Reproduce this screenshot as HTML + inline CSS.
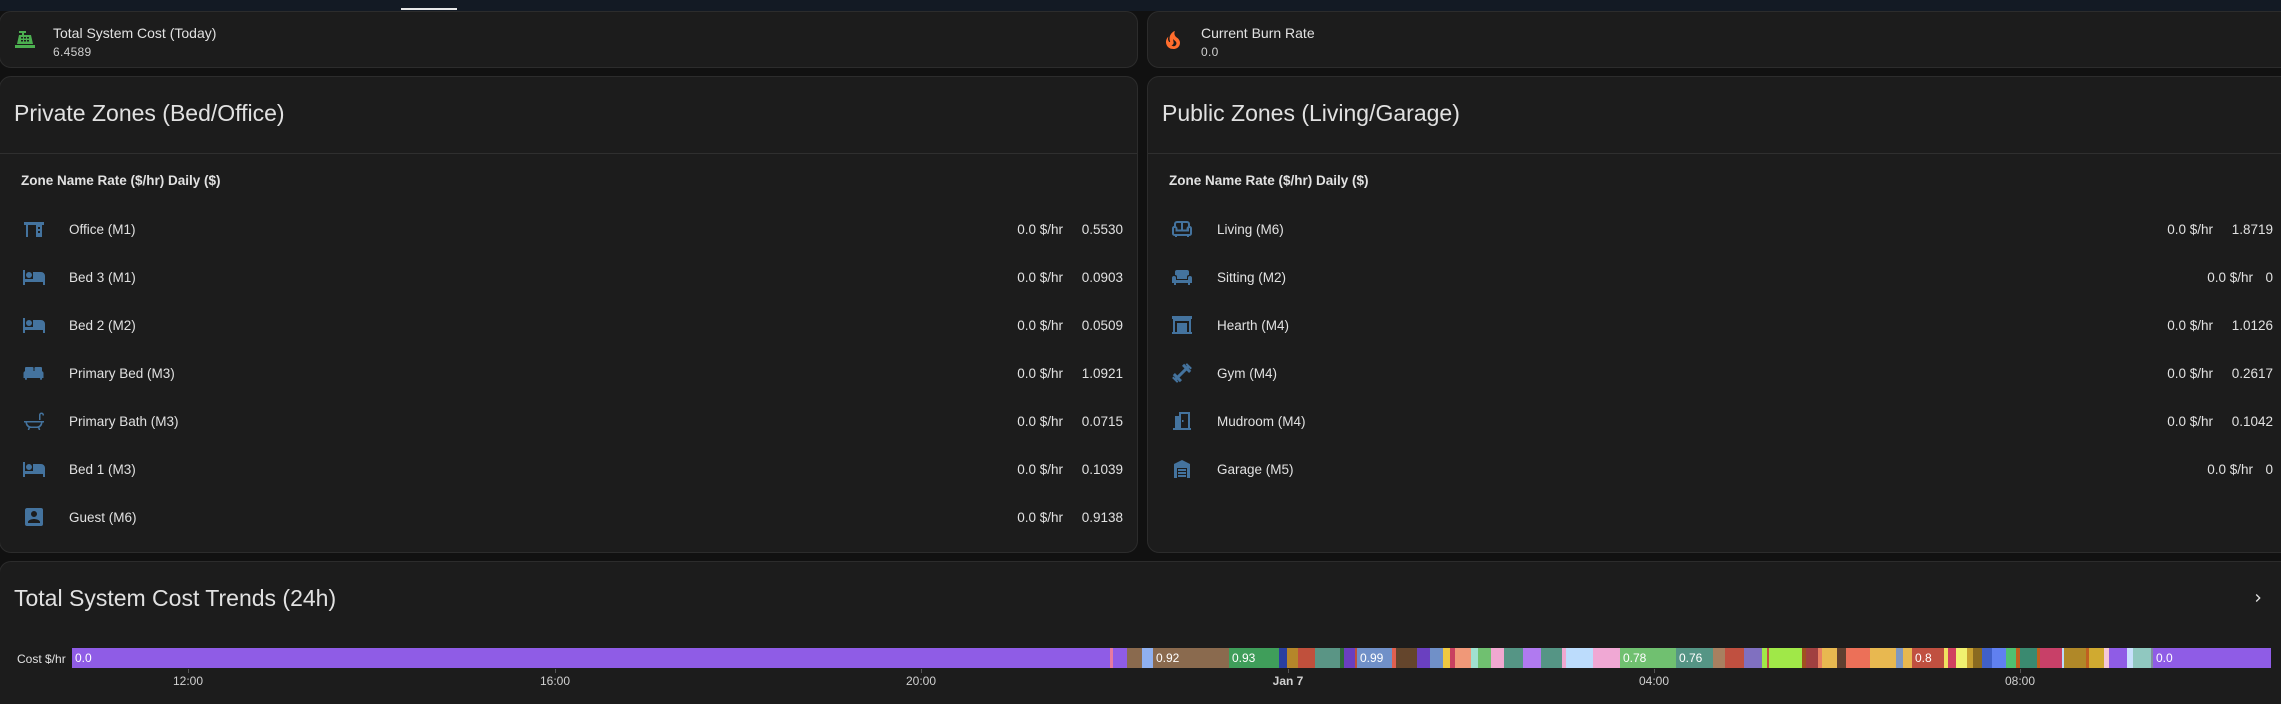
<!DOCTYPE html>
<html style="width:2281px;height:704px;overflow:hidden"><head><meta charset="utf-8"><style>
*{margin:0;padding:0;box-sizing:border-box}
body{width:2281px;height:704px;background:#111111;font-family:"Liberation Sans",sans-serif;color:#e1e1e1;position:relative;overflow:hidden}
.top{position:absolute;left:0;top:0;width:2281px;height:11px;background:#131a24}
.ind{position:absolute;left:401px;top:8px;width:56px;height:2px;background:#e8e8e8}
.card{position:absolute;background:#1c1c1c;border:1px solid #2c2c2c;border-radius:12px}
.ic{position:absolute;width:24px;height:24px}
.t1{position:absolute;font-size:14px;font-weight:500;color:#e1e1e1}
.t2{position:absolute;font-size:12px;color:#d0d0d0;letter-spacing:.3px}
.h{position:absolute;left:14px;font-size:23px;color:#e1e1e1}
.div{position:absolute;left:0;right:0;top:76px;border-top:1px solid #2f2f2f}
.hd{position:absolute;left:21px;top:96px;font-size:13.5px;font-weight:bold;color:#e1e1e1}
.row{position:absolute;left:0;height:48px;display:flex;align-items:center;font-size:13.5px;color:#e1e1e1}
.row svg{position:absolute;left:22px;top:12px;width:24px;height:24px;fill:#44739e}
.row .n{position:absolute;left:69px}
.row .r{position:absolute;text-align:right}
.seg{position:absolute;top:0;height:20px;font-size:12px;color:#fff;line-height:20px;padding-left:3px;overflow:hidden;white-space:nowrap}
.ax{position:absolute;top:674px;font-size:12px;color:#d0d0d0;transform:translateX(-50%)}
.tk{position:absolute;top:669px;width:1px;height:4px;background:#555}
</style></head><body>
<div class="top"><div class="ind"></div></div>

<div class="card" style="left:-1px;top:11px;width:1139px;height:57px">
<svg class="ic" style="left:13px;top:16px" viewBox="0 0 24 24" fill="#4caf50"><path d="M2 17h20v3H2zM6 3h7v2h-2v2h7l2 9H4l2-9h3V5H6zM8 9v1.5h2V9zm3 0v1.5h2V9zm3 0v1.5h2V9zM8 12v1.5h2V12zm3 0v1.5h2V12zm3 0v1.5h2V12z"/></svg>
<div class="t1" style="left:53px;top:13px">Total System Cost (Today)</div>
<div class="t2" style="left:53px;top:33px">6.4589</div>
</div>
<div class="card" style="left:1147px;top:11px;width:1150px;height:57px">
<svg class="ic" style="left:13px;top:16px" viewBox="0 0 24 24" fill="#ff6d2d"><path d="M17.66 11.2C17.43 10.9 17.15 10.64 16.89 10.38C16.22 9.78 15.46 9.35 14.82 8.72C13.33 7.26 13 4.85 13.95 3C13 3.23 12.17 3.75 11.46 4.32C8.87 6.4 7.85 10.07 9.07 13.22C9.11 13.32 9.15 13.42 9.15 13.55C9.15 13.77 9 13.97 8.8 14.05C8.57 14.15 8.33 14.09 8.14 13.93C8.08 13.88 8.04 13.83 8 13.76C6.87 12.33 6.69 10.28 7.45 8.64C5.78 10 4.87 12.3 5 14.47C5.06 14.97 5.12 15.47 5.29 15.97C5.43 16.57 5.7 17.17 6 17.7C7.08 19.43 8.95 20.67 10.96 20.92C13.1 21.19 15.39 20.8 17.03 19.32C18.86 17.66 19.5 15 18.56 12.72L18.43 12.46C18.22 12 17.66 11.2 17.66 11.2M14.5 17.5C14.22 17.74 13.76 18 13.4 18.1C12.28 18.5 11.16 17.94 10.5 17.28C11.69 17 12.4 16.12 12.61 15.23C12.78 14.43 12.46 13.77 12.33 13C12.21 12.26 12.23 11.63 12.5 10.94C12.69 11.32 12.89 11.7 13.13 12C13.9 13 15.11 13.44 15.37 14.8C15.41 14.94 15.43 15.08 15.43 15.23C15.46 16.05 15.1 16.95 14.5 17.5Z"/></svg>
<div class="t1" style="left:53px;top:13px">Current Burn Rate</div>
<div class="t2" style="left:53px;top:33px">0.0</div>
</div>

<!-- Private -->
<div class="card" style="left:-1px;top:76px;width:1139px;height:477px">
<div class="h" style="top:23px">Private Zones (Bed/Office)</div>
<div class="div"></div>
<div class="hd">Zone Name Rate ($/hr) Daily ($)</div>
<div class="row" style="top:128px;width:1123px"><svg viewBox="0 0 24 24"><path d="M2 5h20v3h-2v12h-6v-12h-8v12h-2v-12h-2zM16 10v2h2v-2zm0 4v2h2v-2z"/></svg><span class="n">Office (M1)</span><span class="r" style="right:60px">0.0 $/hr</span><span class="r" style="right:0">0.5530</span></div>
<div class="row" style="top:176px;width:1123px"><svg viewBox="0 0 24 24"><path d="M19,7H11V14H3V5H1V20H3V17H21V20H23V11A4,4 0 0,0 19,7M7,13A3,3 0 0,0 10,10A3,3 0 0,0 7,7A3,3 0 0,0 4,10A3,3 0 0,0 7,13Z"/></svg><span class="n">Bed 3 (M1)</span><span class="r" style="right:60px">0.0 $/hr</span><span class="r" style="right:0">0.0903</span></div>
<div class="row" style="top:224px;width:1123px"><svg viewBox="0 0 24 24"><path d="M19,7H11V14H3V5H1V20H3V17H21V20H23V11A4,4 0 0,0 19,7M7,13A3,3 0 0,0 10,10A3,3 0 0,0 7,7A3,3 0 0,0 4,10A3,3 0 0,0 7,13Z"/></svg><span class="n">Bed 2 (M2)</span><span class="r" style="right:60px">0.0 $/hr</span><span class="r" style="right:0">0.0509</span></div>
<div class="row" style="top:272px;width:1123px"><svg viewBox="0 0 24 24"><path d="M5 6h5.5a1 1 0 0 1 1 1v3h1v-3a1 1 0 0 1 1-1h5.5a1 1 0 0 1 1 1v3.3a2 2 0 0 1 1.5 1.9v4.8h-1.3l-.7 2h-1l-.5-2h-13l-.5 2h-1l-.7-2h-1.3v-4.8a2 2 0 0 1 1.5-1.9v-3.3a1 1 0 0 1 1-1z"/></svg><span class="n">Primary Bed (M3)</span><span class="r" style="right:60px">0.0 $/hr</span><span class="r" style="right:0">1.0921</span></div>
<div class="row" style="top:320px;width:1123px"><svg viewBox="0 0 24 24"><path d="M2 12h20v1.5h-1.5a6 6 0 0 1-3 5l.8 2.5h-1.5l-.8-2h-8l-.8 2h-1.5l.8-2.5a6 6 0 0 1-3-5H2zM5 13.5a4.5 4.5 0 0 0 4.5 4h5a4.5 4.5 0 0 0 4.5-4zM17 11V6a2.5 2.5 0 0 1 5 0v.5h-1.5V6a1 1 0 0 0-2 0v5z"/></svg><span class="n">Primary Bath (M3)</span><span class="r" style="right:60px">0.0 $/hr</span><span class="r" style="right:0">0.0715</span></div>
<div class="row" style="top:368px;width:1123px"><svg viewBox="0 0 24 24"><path d="M19,7H11V14H3V5H1V20H3V17H21V20H23V11A4,4 0 0,0 19,7M7,13A3,3 0 0,0 10,10A3,3 0 0,0 7,7A3,3 0 0,0 4,10A3,3 0 0,0 7,13Z"/></svg><span class="n">Bed 1 (M3)</span><span class="r" style="right:60px">0.0 $/hr</span><span class="r" style="right:0">0.1039</span></div>
<div class="row" style="top:416px;width:1123px"><svg viewBox="0 0 24 24"><path d="M6,17C6,15 10,14 12,14C14,14 18,15 18,17V18H6M15,9A3,3 0 0,1 12,12A3,3 0 0,1 9,9A3,3 0 0,1 12,6A3,3 0 0,1 15,9M3,5V19A2,2 0 0,0 5,21H19A2,2 0 0,0 21,19V5A2,2 0 0,0 19,3H5C3.89,3 3,3.9 3,5Z"/></svg><span class="n">Guest (M6)</span><span class="r" style="right:60px">0.0 $/hr</span><span class="r" style="right:0">0.9138</span></div>
</div>

<!-- Public -->
<div class="card" style="left:1147px;top:76px;width:1150px;height:477px">
<div class="h" style="top:23px">Public Zones (Living/Garage)</div>
<div class="div"></div>
<div class="hd">Zone Name Rate ($/hr) Daily ($)</div>
<div class="row" style="top:128px;width:1125px"><svg viewBox="0 0 24 24"><path d="M7 4h10a3 3 0 0 1 3 3v2a2.5 2.5 0 0 1 2 2.5v5a2.5 2.5 0 0 1-2.5 2.5h-.5v1h-2v-1h-10v1h-2v-1h-.5a2.5 2.5 0 0 1-2.5-2.5v-5a2.5 2.5 0 0 1 2-2.5v-2a3 3 0 0 1 3-3zm0 2a1 1 0 0 0-1 1v2.3a2.5 2.5 0 0 1 1.5 2.2v1h3.5v-6.5zm6 0v6.5h3.5v-1a2.5 2.5 0 0 1 1.5-2.2v-2.3a1 1 0 0 0-1-1zm-8.5 5a.5.5 0 0 0-.5.5v5a.5.5 0 0 0 .5.5h15a.5.5 0 0 0 .5-.5v-5a.5.5 0 0 0-1 0v3h-13.5v-3a.5.5 0 0 0-.5-.5z"/></svg><span class="n">Living (M6)</span><span class="r" style="right:60px">0.0 $/hr</span><span class="r" style="right:0">1.8719</span></div>
<div class="row" style="top:176px;width:1125px"><svg viewBox="0 0 24 24"><path d="M7 5h10a2 2 0 0 1 2 2v3a2 2 0 0 0-2 2v2h-10v-2a2 2 0 0 0-2-2v-3a2 2 0 0 1 2-2zM4 11a2 2 0 0 1 2 2v2h12v-2a2 2 0 0 1 4 0v5h-2v2h-2v-2h-12v2h-2v-2h-2v-5a2 2 0 0 1 2-2z"/></svg><span class="n">Sitting (M2)</span><span class="r" style="right:20px">0.0 $/hr</span><span class="r" style="right:0">0</span></div>
<div class="row" style="top:224px;width:1125px"><svg viewBox="0 0 24 24"><path d="M2 3h20v3h-1v13h1v2h-20v-2h1v-13h-1zM5 8v11h2v-9h10v9h2v-11zM12 11.5c1 1.3 2.5 2.5 2.5 4.2a2.5 2.5 0 0 1-5 0c0-1.2.8-1.8 1.2-2.5.3.8.6 1.2 1 1.2.5 0 .5-1.3.3-2.9z"/></svg><span class="n">Hearth (M4)</span><span class="r" style="right:60px">0.0 $/hr</span><span class="r" style="right:0">1.0126</span></div>
<div class="row" style="top:272px;width:1125px"><svg viewBox="0 0 24 24"><g transform="rotate(45 12 12)"><rect x="10.5" y="3" width="3" height="18"/><rect x="7" y="4" width="10" height="3"/><rect x="7" y="17" width="10" height="3"/><rect x="8.5" y="1.5" width="7" height="2"/><rect x="8.5" y="20.5" width="7" height="2"/></g></svg><span class="n">Gym (M4)</span><span class="r" style="right:60px">0.0 $/hr</span><span class="r" style="right:0">0.2617</span></div>
<div class="row" style="top:320px;width:1125px"><svg viewBox="0 0 24 24"><path d="M3 19h2v-12h4v-4h11v16h1v2h-18zM11 5v14h7v-14zM12 11h1.5v2h-1.5z"/></svg><span class="n">Mudroom (M4)</span><span class="r" style="right:60px">0.0 $/hr</span><span class="r" style="right:0">0.1042</span></div>
<div class="row" style="top:368px;width:1125px"><svg viewBox="0 0 24 24"><path d="M12 3l8 4v14h-3v-10h-10v10h-3v-14zM8 12h8v2h-8zm0 3h8v2h-8zm0 3h8v2h-8z"/></svg><span class="n">Garage (M5)</span><span class="r" style="right:20px">0.0 $/hr</span><span class="r" style="right:0">0</span></div>
</div>

<!-- Trends -->
<div class="card" style="left:-1px;top:561px;width:2300px;height:160px;border-bottom:none;border-radius:12px 12px 0 0">
<div class="h" style="top:23px">Total System Cost Trends (24h)</div>
<svg style="position:absolute;left:2250px;top:28px" width="16" height="16" viewBox="0 0 24 24" fill="#e1e1e1"><path d="M8.59,16.58L13.17,12L8.59,7.41L10,6L16,12L10,18L8.59,16.58Z"/></svg>
<div style="position:absolute;left:17px;top:90px;font-size:12px;color:#e1e1e1">Cost $/hr</div>
</div>
<div id="bar" style="position:absolute;left:0;top:648px;width:2281px;height:20px">
<div class="seg" style="left:72px;width:1038px;background:#8f5ce6">0.0</div>
<div class="seg" style="left:1110px;width:3px;background:#e87aa0"></div>
<div class="seg" style="left:1113px;width:14px;background:#8f5ce6"></div>
<div class="seg" style="left:1127px;width:15px;background:#8a6a4e"></div>
<div class="seg" style="left:1142px;width:11px;background:#8fb0f0"></div>
<div class="seg" style="left:1153px;width:76px;background:#8a6a4e">0.92</div>
<div class="seg" style="left:1229px;width:50px;background:#3f9e5a">0.93</div>
<div class="seg" style="left:1279px;width:8px;background:#2a3fa0"></div>
<div class="seg" style="left:1287px;width:11px;background:#b5862a"></div>
<div class="seg" style="left:1298px;width:17px;background:#c0503c"></div>
<div class="seg" style="left:1315px;width:25px;background:#5a9585"></div>
<div class="seg" style="left:1340px;width:4px;background:#2e6a3a"></div>
<div class="seg" style="left:1344px;width:11px;background:#6a3fc0"></div>
<div class="seg" style="left:1355px;width:2px;background:#c0503c"></div>
<div class="seg" style="left:1357px;width:35px;background:#7090c8">0.99</div>
<div class="seg" style="left:1392px;width:4px;background:#e06050"></div>
<div class="seg" style="left:1396px;width:21px;background:#64452c"></div>
<div class="seg" style="left:1417px;width:13px;background:#6a40c0"></div>
<div class="seg" style="left:1430px;width:13px;background:#7090c8"></div>
<div class="seg" style="left:1443px;width:7px;background:#f0c840"></div>
<div class="seg" style="left:1450px;width:5px;background:#c84060"></div>
<div class="seg" style="left:1455px;width:16px;background:#f09878"></div>
<div class="seg" style="left:1471px;width:7px;background:#a0e0d0"></div>
<div class="seg" style="left:1478px;width:13px;background:#70c070"></div>
<div class="seg" style="left:1491px;width:13px;background:#f0a8d0"></div>
<div class="seg" style="left:1504px;width:19px;background:#559585"></div>
<div class="seg" style="left:1523px;width:18px;background:#b07af0"></div>
<div class="seg" style="left:1541px;width:21px;background:#559585"></div>
<div class="seg" style="left:1562px;width:4px;background:#f0a8d0"></div>
<div class="seg" style="left:1566px;width:27px;background:#bcdcfc"></div>
<div class="seg" style="left:1593px;width:27px;background:#f0a8d4"></div>
<div class="seg" style="left:1620px;width:56px;background:#70c070">0.78</div>
<div class="seg" style="left:1676px;width:37px;background:#559585">0.76</div>
<div class="seg" style="left:1713px;width:12px;background:#a88060"></div>
<div class="seg" style="left:1725px;width:19px;background:#c05040"></div>
<div class="seg" style="left:1744px;width:18px;background:#8070c0"></div>
<div class="seg" style="left:1762px;width:5px;background:#a0e848"></div>
<div class="seg" style="left:1767px;width:2px;background:#c05040"></div>
<div class="seg" style="left:1769px;width:33px;background:#a0e848"></div>
<div class="seg" style="left:1802px;width:4px;background:#a05020"></div>
<div class="seg" style="left:1806px;width:12px;background:#a04040"></div>
<div class="seg" style="left:1818px;width:4px;background:#e88060"></div>
<div class="seg" style="left:1822px;width:15px;background:#e8b850"></div>
<div class="seg" style="left:1837px;width:9px;background:#604030"></div>
<div class="seg" style="left:1846px;width:24px;background:#ec7058"></div>
<div class="seg" style="left:1870px;width:26px;background:#e8b850"></div>
<div class="seg" style="left:1896px;width:7px;background:#8098c0"></div>
<div class="seg" style="left:1903px;width:9px;background:#e8b850"></div>
<div class="seg" style="left:1912px;width:32px;background:#c05040">0.8</div>
<div class="seg" style="left:1944px;width:4px;background:#f0e060"></div>
<div class="seg" style="left:1948px;width:8px;background:#d04060"></div>
<div class="seg" style="left:1956px;width:11px;background:#f0f070"></div>
<div class="seg" style="left:1967px;width:6px;background:#c8a030"></div>
<div class="seg" style="left:1973px;width:9px;background:#8a6a20"></div>
<div class="seg" style="left:1982px;width:10px;background:#4060c8"></div>
<div class="seg" style="left:1992px;width:14px;background:#6080f0"></div>
<div class="seg" style="left:2006px;width:10px;background:#50c070"></div>
<div class="seg" style="left:2016px;width:4px;background:#c06020"></div>
<div class="seg" style="left:2020px;width:17px;background:#3a8a70"></div>
<div class="seg" style="left:2037px;width:3px;background:#c06020"></div>
<div class="seg" style="left:2040px;width:22px;background:#c84068"></div>
<div class="seg" style="left:2062px;width:2px;background:#bcdcfc"></div>
<div class="seg" style="left:2064px;width:22px;background:#b08828"></div>
<div class="seg" style="left:2086px;width:3px;background:#c06020"></div>
<div class="seg" style="left:2089px;width:15px;background:#d0aa30"></div>
<div class="seg" style="left:2104px;width:5px;background:#f4c8d8"></div>
<div class="seg" style="left:2109px;width:18px;background:#8f5ce6"></div>
<div class="seg" style="left:2127px;width:6px;background:#c8e0fc"></div>
<div class="seg" style="left:2133px;width:18px;background:#90c8c0"></div>
<div class="seg" style="left:2151px;width:2px;background:#8090a0"></div>
<div class="seg" style="left:2153px;width:118px;background:#8f5ce6">0.0</div>
</div>
<div class="tk" style="left:188px"></div><div class="ax" style="left:188px">12:00</div>
<div class="tk" style="left:555px"></div><div class="ax" style="left:555px">16:00</div>
<div class="tk" style="left:921px"></div><div class="ax" style="left:921px">20:00</div>
<div class="tk" style="left:1288px"></div><div class="ax" style="left:1288px;font-weight:bold">Jan 7</div>
<div class="tk" style="left:1654px"></div><div class="ax" style="left:1654px">04:00</div>
<div class="tk" style="left:2020px"></div><div class="ax" style="left:2020px">08:00</div>
</body></html>
